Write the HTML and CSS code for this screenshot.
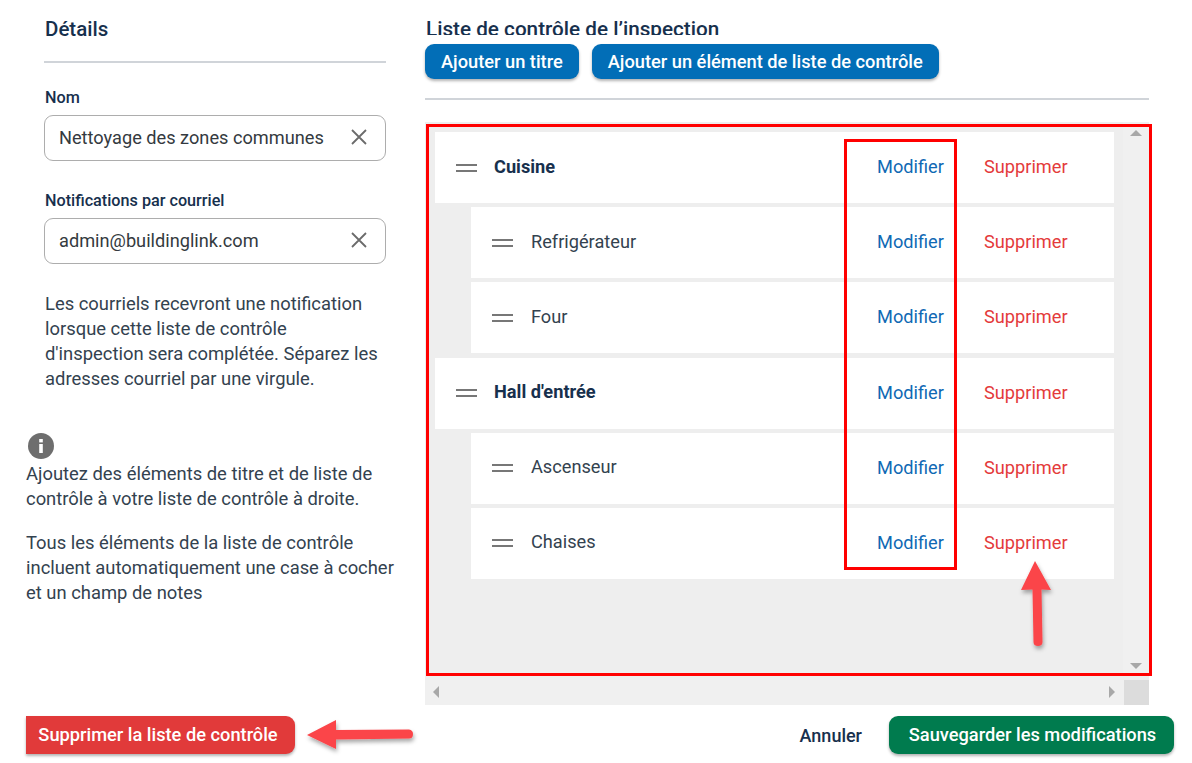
FILE: index.html
```html
<!DOCTYPE html>
<html lang="fr">
<head>
<meta charset="utf-8">
<title>Liste de contrôle de l'inspection</title>
<link rel="stylesheet" href="styles.css">
</head>
<body>
<div class="page">
  <div class="top">
    <aside class="side">
      <div class="details">
        <h2 class="side-title">Détails</h2>
        <label class="label label-first">Nom</label>
        <div class="field"><span>Nettoyage des zones communes</span>
          <svg class="clear" viewBox="0 0 16 16"><path d="M1 1L15 15M15 1L1 15"/></svg></div>
        <label class="label label-second">Notifications par courriel</label>
        <div class="field"><span>admin@buildinglink.com</span>
          <svg class="clear" viewBox="0 0 16 16"><path d="M1 1L15 15M15 1L1 15"/></svg></div>
        <p class="hint">Les courriels recevront une notification lorsque cette liste de contrôle d'inspection sera complétée. Séparez les adresses courriel par une virgule.</p>
      </div>
      <div class="info">
        <svg class="info-icon" viewBox="0 0 26 26"><circle cx="13" cy="13" r="13" fill="#6e6e6e"/><rect x="11.2" y="11" width="3.6" height="9" fill="#fff"/><rect x="11.2" y="6" width="3.6" height="3.4" fill="#fff"/></svg>
        <p>Ajoutez des éléments de titre et de liste de contrôle à votre liste de contrôle à droite.</p>
        <p>Tous les éléments de la liste de contrôle incluent automatiquement une case à cocher et un champ de notes</p>
      </div>
    </aside>
    <main class="main">
      <h2 class="main-title">Liste de contrôle de l’inspection</h2>
      <div class="actions">
        <button class="btn btn-blue">Ajouter un titre</button>
        <button class="btn btn-blue">Ajouter un élément de liste de contrôle</button>
      </div>
      <hr class="rule">
      <div class="panel">
        <div class="panel-body">
          <ul class="list">
            <li class="row row-head"><i class="handle"></i><span class="name">Cuisine</span><a class="edit">Modifier</a><a class="del">Supprimer</a></li>
            <li class="row row-child"><i class="handle"></i><span class="name">Refrigérateur</span><a class="edit">Modifier</a><a class="del">Supprimer</a></li>
            <li class="row row-child"><i class="handle"></i><span class="name">Four</span><a class="edit">Modifier</a><a class="del">Supprimer</a></li>
            <li class="row row-head"><i class="handle"></i><span class="name">Hall d'entrée</span><a class="edit">Modifier</a><a class="del">Supprimer</a></li>
            <li class="row row-child"><i class="handle"></i><span class="name">Ascenseur</span><a class="edit">Modifier</a><a class="del">Supprimer</a></li>
            <li class="row row-child"><i class="handle"></i><span class="name">Chaises</span><a class="edit">Modifier</a><a class="del">Supprimer</a></li>
          </ul>
          <div class="vbar"><i class="tri tri-up"></i><i class="tri tri-down"></i></div>
        </div>
        <div class="hbar">
          <div class="htrack"><i class="tri tri-left"></i><i class="tri tri-right"></i></div>
          <div class="corner"></div>
        </div>
      </div>
    </main>
  </div>
  <footer class="bottom">
    <button class="btn btn-red">Supprimer la liste de contrôle</button>
    <div class="bottom-right">
      <a class="cancel">Annuler</a>
      <button class="btn btn-green">Sauvegarder les modifications</button>
    </div>
  </footer>
  <svg class="marks" viewBox="0 0 1192 763">
    <defs><filter id="sh" x="-30%" y="-30%" width="160%" height="160%"><feDropShadow dx="1" dy="3" stdDeviation="2" flood-color="#000" flood-opacity=".35"/></filter></defs>
    <rect class="mark-box" x="427.5" y="125.5" width="723" height="549"/>
    <rect class="mark-box" x="845.5" y="140.5" width="110" height="428"/>
    <path class="mark-arrow" filter="url(#sh)" d="M1035 561L1051 590L1041.5 589.500L1042.500 642Q1042.500 646 1038 646Q1033.500 646 1033.500 642L1032.500 589.500L1021 590Z"/>
    <path class="mark-arrow" filter="url(#sh)" d="M307 735L336 720L336 730L409 729.500Q413 730 413 734Q413 738.500 409 738.500L336 739.500L336 749Z"/>
  </svg>
</div>
</body>
</html>
```
FILE: styles.css
```css
* { box-sizing: border-box; }
html, body { margin: 0; padding: 0; background: #fff; }
body { font-family: Roboto, "Liberation Sans", sans-serif; color: #2b3a4a; font-size: 18px; }
.page { position: relative; width: 1192px; height: 763px; overflow: hidden; }
.top { display: flex; height: 705px; }

.side { width: 425px; padding-left: 26px; flex: none; }
.details { margin-left: 18px; width: 342px; }
.side-title { margin: 0; padding: 17px 0 20px 1px; font-size: 20.500px; line-height: 24px; font-weight: 500; color: #17304d; border-bottom: 2px solid #d0d4d9; }
.label { display: block; padding-left: 1px; font-size: 16.200px; line-height: 20px; font-weight: 500; color: #17304d; }
.label-first { margin-top: 25px; margin-bottom: 7px; }
.label-second { margin-top: 30px; margin-bottom: 7px; }
.field { height: 46px; display: flex; align-items: center; justify-content: space-between; padding: 0 18px 2px 14px; border: 1px solid #adadad; border-radius: 9px; font-size: 18.200px; color: #343a40; }
.clear { width: 16px; height: 16px; fill: none; stroke: #6b6b6b; stroke-width: 1.800; flex: none; }
.hint { margin: 27px 0 0; padding-left: 1px; line-height: 25px; font-size: 18.400px; color: #33424f; }

.info { margin-top: 42px; font-size: 18.400px; line-height: 25px; color: #33424f; width: 380px; }
.info-icon { display: block; width: 26px; height: 26px; margin: 0 0 2px 2px; }
.info p { margin: 0 0 19px; }

.main { width: 724px; flex: none; }
.main-title { margin: 0; padding: 17px 0 0 1px; height: 35px; overflow: hidden; font-size: 20.700px; line-height: 24px; font-weight: 500; color: #17304d; }
.actions { display: flex; gap: 13px; margin-top: 9px; }
.btn { height: 35px; padding: 0 16px; border: 0; border-radius: 9px; font: 500 18.250px/35px Roboto, "Liberation Sans", sans-serif; color: #fff; box-shadow: 0 2px 3px rgba(0,0,0,.3); }
.btn-blue { background: #026eb7; }
.rule { margin: 19px 0 0; border: 0; height: 2px; background: #d0d4d9; }
.panel { margin-top: 22px; height: 583px; background: #eee; display: flex; flex-direction: column; }
.panel-body { flex: 1; display: flex; min-height: 0; }
.list { list-style: none; margin: 0; padding: 10px 9px 0 10px; flex: 1; display: flex; flex-direction: column; gap: 4.200px; }
.row { height: 71px; flex: none; background: #fff; display: flex; align-items: center; padding-left: 21px; }
.row-child { margin-left: 36px; }
.handle { display: block; width: 21px; height: 8px; margin-right: 17px; border-top: 2px solid #777; border-bottom: 2px solid #777; flex: none; }
.row-child .handle { margin-right: 18px; }
.name { flex: 1; font-size: 18.200px; color: #33424f; line-height: 20px; margin-top: -2px; }
.row-head .name { font-weight: 700; color: #17304d; }
.edit { width: 107px; font-size: 18.200px; color: #0f69b4; line-height: 20px; margin-top: -1px; }
.del { width: 130px; font-size: 18.200px; color: #e43b3b; line-height: 20px; margin-top: -1px; }

.vbar { width: 26px; background: #f0f0f0; position: relative; flex: none; }
.tri { position: absolute; width: 0; height: 0; border-style: solid; border-color: transparent; }
.tri-up { top: 8px; left: 7px; border-width: 0 6px 6px; border-bottom-color: #a8a8a8; }
.tri-down { bottom: 7px; left: 7px; border-width: 6px 6px 0; border-top-color: #a8a8a8; }
.hbar { height: 25px; display: flex; flex: none; margin-top: 4px; }
.htrack { flex: 1; background: #f0f0f0; position: relative; }
.tri-left { left: 8px; top: 6px; border-width: 6px 6px 6px 0; border-right-color: #a8a8a8; }
.tri-right { right: 9px; top: 6px; border-width: 6px 0 6px 6px; border-left-color: #a8a8a8; }
.corner { width: 25px; background: #dcdcdc; }

.bottom { display: flex; justify-content: space-between; align-items: flex-start; padding: 11px 18px 0 26px; }
.bottom .btn { height: 38px; line-height: 38px; }
.btn-red { width: 269px; padding: 0 5px 0 0; background: #e13a3a; border-radius: 0 9px 9px 0; }
.btn-green { width: 285px; padding: 0 0 0 2px; background: #007b4e; }
.bottom-right { display: flex; align-items: center; gap: 27px; height: 38px; }
.cancel { font-size: 18px; font-weight: 500; color: #17304d; }

.marks { position: absolute; left: 0; top: 0; width: 1192px; height: 763px; pointer-events: none; }
.mark-box { fill: none; stroke: #f00; stroke-width: 3; }
.mark-arrow { fill: #fb4449; }
```
